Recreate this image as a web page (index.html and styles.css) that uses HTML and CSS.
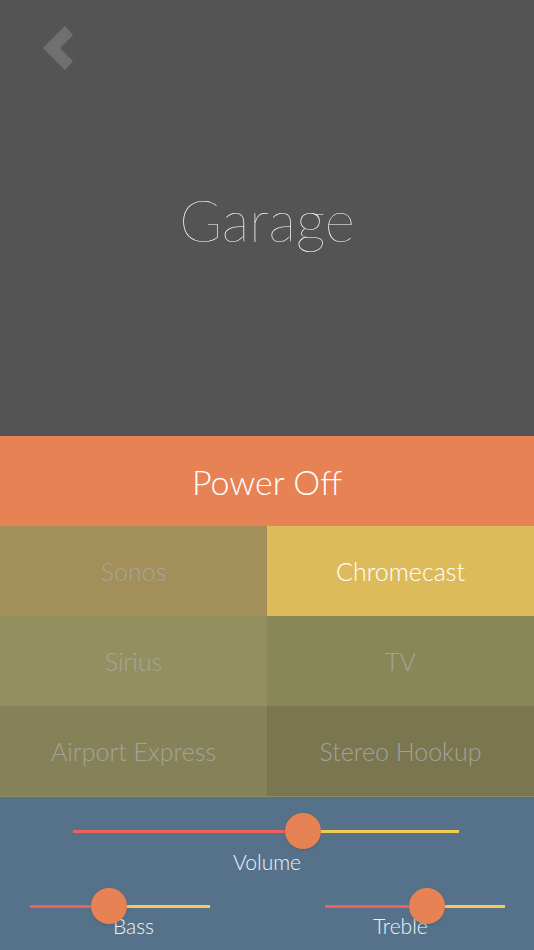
FILE: index.html
```html
<!DOCTYPE html>
<html lang="en">
<head>
    <meta charset="UTF-8">
    <meta name="viewport" content="width=device-width, initial-scale=1.0">
    <title>Garage</title>
    <link rel="stylesheet" href="styles.css">
</head>
<body>
    <!-- Room header -->
    <header class="room-header">
        <a class="back-btn" href="#" aria-label="Back">
            <svg width="40" height="50" viewBox="0 0 40 50">
                <polygon points="3,22 25,0 33,9 20,22 33,35 25,44" fill="#707070"/>
            </svg>
        </a>
        <h1 class="room-title">Garage</h1>
    </header>

    <button class="power-btn">Power Off</button>

    <!-- Source selection -->
    <div class="sources">
        <div class="source sonos">Sonos</div>
        <div class="source chromecast active">Chromecast</div>
        <div class="source sirius">Sirius</div>
        <div class="source tv">TV</div>
        <div class="source airport">Airport Express</div>
        <div class="source stereo">Stereo Hookup</div>
    </div>

    <!-- Audio controls -->
    <section class="controls">
        <div class="control volume">
            <div class="slider">
                <div class="track-left" style="width: 59.6%"></div>
                <div class="track-right"></div>
                <div class="thumb" style="left: 59.6%"></div>
            </div>
            <div class="control-label">Volume</div>
        </div>

        <div class="control-row">
            <div class="control bass">
                <div class="slider">
                    <div class="track-left" style="width: 43.8%"></div>
                    <div class="track-right"></div>
                    <div class="thumb" style="left: 43.8%"></div>
                </div>
                <div class="control-label">Bass</div>
            </div>
            <div class="control treble">
                <div class="slider">
                    <div class="track-left" style="width: 56.7%"></div>
                    <div class="track-right"></div>
                    <div class="thumb" style="left: 56.7%"></div>
                </div>
                <div class="control-label">Treble</div>
            </div>
        </div>
    </section>
</body>
</html>
```

FILE: styles.css
```css
body {
    font-family: Lato, "Liberation Sans", sans-serif;
    margin: 0;
    padding: 0;
    width: 534px;
    background-color: #56728a;
    color: #fff;
}

.room-header {
    position: relative;
    height: 436px;
    background-color: #545454;
    display: flex;
    align-items: center;
    justify-content: center;
}

.back-btn {
    position: absolute;
    left: 40px;
    top: 26px;
    display: block;
}

.back-btn svg {
    display: block;
}

.room-title {
    margin: 0;
    padding-top: 2px;
    font-size: 58px;
    font-weight: 100;
    color: #fff;
}

.power-btn {
    display: block;
    width: 100%;
    height: 90px;
    margin: 0;
    padding: 0;
    border: none;
    background-color: #e78254;
    color: #fff;
    font-family: inherit;
    font-size: 34px;
    font-weight: 300;
}

.sources {
    display: grid;
    grid-template-columns: 267px 267px;
    grid-auto-rows: 90px;
    border-bottom: 1px solid #8c8b5f;
}

.source {
    display: flex;
    align-items: center;
    justify-content: center;
    font-size: 25px;
    font-weight: 300;
    color: rgba(168, 168, 162, 0.9);
}

.sonos { background-color: #a28f5a; }
.chromecast { background-color: #debb5a; }
.sirius { background-color: #938f5e; }
.tv { background-color: #888758; }
.airport { background-color: #85825a; }
.stereo { background-color: #7a7750; }

.source.active {
    color: #fff;
}

.controls {
    height: 153px;
    padding-top: 16px;
    box-sizing: border-box;
}

.slider {
    position: relative;
    height: 36px;
    display: flex;
    align-items: center;
}

.track-left {
    height: 3px;
    background-color: #f0605a;
}

.track-right {
    flex: 1;
    height: 3px;
    background-color: #f5cb55;
}

.thumb {
    position: absolute;
    top: 0;
    width: 36px;
    height: 36px;
    margin-left: -18px;
    border-radius: 50%;
    background-color: #e78254;
    box-shadow: 0 1px 3px rgba(0, 0, 0, 0.15);
}

.control-label {
    text-align: center;
    font-size: 21px;
    font-weight: 300;
    color: #eef2f5;
    line-height: 24px;
}

.volume .slider {
    width: 386px;
    margin-left: 73px;
}

.volume .control-label {
    margin-top: 1px;
}

.control-row {
    display: grid;
    grid-template-columns: 267px 267px;
    margin-top: 14px;
}

.bass .slider {
    width: 180px;
    margin-left: 30px;
}

.treble .slider {
    width: 180px;
    margin-left: 58px;
}

.control-row .control-label {
    position: relative;
    margin-top: -10px;
    z-index: 0;
}

.control-row .thumb {
    z-index: 1;
}
```
